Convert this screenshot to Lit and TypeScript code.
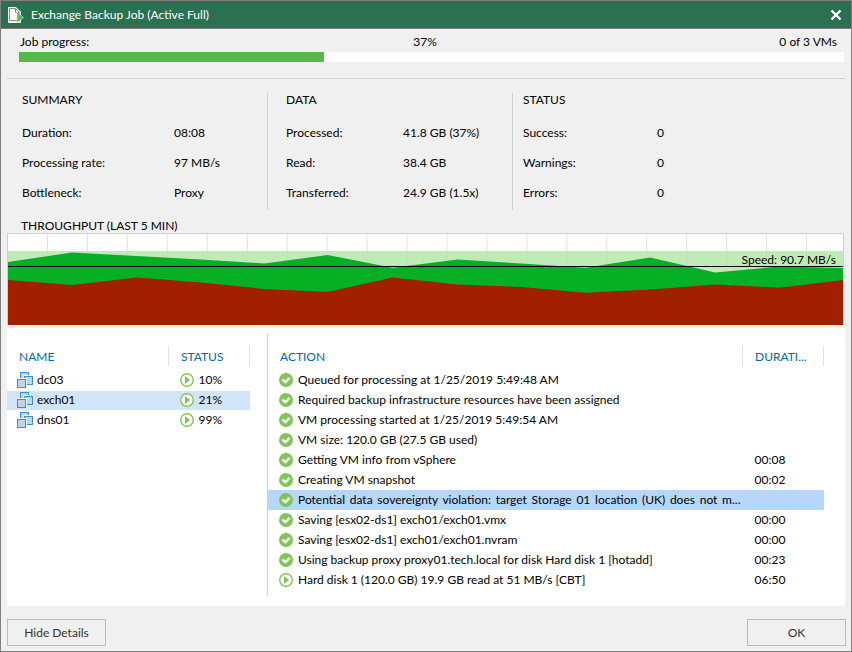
import { LitElement, html, css, svg } from "lit";
import { customElement } from "lit/decorators.js";
import { classMap } from "lit/directives/class-map.js";

type Row = { label: string; value: string };
type Group = { title: string; rows: Row[] };
type Vm = { name: string; status: string; selected?: boolean };
type Action = { text: string; duration?: string; running?: boolean; selected?: boolean };

const GROUPS: Group[] = [
  {
    title: "SUMMARY",
    rows: [
      { label: "Duration:", value: "08:08" },
      { label: "Processing rate:", value: "97 MB/s" },
      { label: "Bottleneck:", value: "Proxy" },
    ],
  },
  {
    title: "DATA",
    rows: [
      { label: "Processed:", value: "41.8 GB (37%)" },
      { label: "Read:", value: "38.4 GB" },
      { label: "Transferred:", value: "24.9 GB (1.5x)" },
    ],
  },
  {
    title: "STATUS",
    rows: [
      { label: "Success:", value: "0" },
      { label: "Warnings:", value: "0" },
      { label: "Errors:", value: "0" },
    ],
  },
];

const VMS: Vm[] = [
  { name: "dc03", status: "10%" },
  { name: "exch01", status: "21%", selected: true },
  { name: "dns01", status: "99%" },
];

const ACTIONS: Action[] = [
  { text: "Queued for processing at 1/25/2019 5:49:48 AM" },
  { text: "Required backup infrastructure resources have been assigned" },
  { text: "VM processing started at 1/25/2019 5:49:54 AM" },
  { text: "VM size: 120.0 GB (27.5 GB used)" },
  { text: "Getting VM info from vSphere", duration: "00:08" },
  { text: "Creating VM snapshot", duration: "00:02" },
  {
    text: "Potential data sovereignty violation: target Storage 01 location (UK) does not m...",
    selected: true,
  },
  { text: "Saving [esx02-ds1] exch01/exch01.vmx", duration: "00:00" },
  { text: "Saving [esx02-ds1] exch01/exch01.nvram", duration: "00:00" },
  { text: "Using backup proxy proxy01.tech.local for disk Hard disk 1 [hotadd]", duration: "00:23" },
  { text: "Hard disk 1 (120.0 GB) 19.9 GB read at 51 MB/s [CBT]", duration: "06:50", running: true },
];

const doneIcon = svg`<svg class="icon" viewBox="0 0 14 14" width="14" height="14" aria-hidden="true">
  <circle cx="7" cy="7" r="7" fill="#7fc655"/>
  <path d="M3.4 6.6 6.4 9.2 10.6 4.8" fill="none" stroke="#fff" stroke-width="2.4"/>
</svg>`;

const runIcon = svg`<svg class="icon" viewBox="0 0 14 14" width="14" height="14" aria-hidden="true">
  <circle cx="7" cy="7" r="6.3" fill="#fff" stroke="#82c65a" stroke-width="1.4"/>
  <path d="M5 3 10 7 5 11Z" fill="#7fc655"/>
</svg>`;

const vmIcon = svg`<svg class="icon" viewBox="0 0 16 16" width="16" height="16" aria-hidden="true">
  <rect x="3.5" y="0.5" width="8" height="8" fill="#b9d5ef" stroke="#3f8fc4"/>
  <path d="M6.5 13V3.5H12" fill="none" stroke="#fff"/>
  <rect x="7.5" y="4.5" width="8" height="8" fill="#b9d5ef" stroke="#3f8fc4"/>
  <path d="M0 6.5H9.5V16" fill="none" stroke="#fff"/>
  <rect x="0.5" y="7.5" width="8" height="8" fill="#b9d5ef" stroke="#3f8fc4"/>
</svg>`;

@customElement("app-root")
export class AppRoot extends LitElement {
  static styles = css`
    :host {
      display: flex;
      flex-direction: column;
      box-sizing: border-box;
      min-height: 100vh;
      border: 1px solid #808080;
      background: #f0f0f0;
      color: #000;
      font: 12px/16px Lato, "Liberation Sans", sans-serif;
      white-space: nowrap;
    }
    .titlebar {
      display: flex;
      align-items: center;
      gap: 7px;
      height: 27px;
      padding: 0 9px 0 7px;
      background: #2b7151;
      border-bottom: 1px solid #808080;
      color: #fff;
    }
    h1, h2 {
      margin: 0;
      font: inherit;
    }
    h1 {
      flex: 1;
    }
    .icon {
      display: block;
      flex: none;
    }
    button {
      box-sizing: border-box;
      margin: 0;
      font: inherit;
      color: #333;
    }
    .close {
      display: flex;
      padding: 0;
      border: 0;
      background: none;
    }
    main {
      flex: 1;
      display: flex;
      flex-direction: column;
      padding: 5px 6px 0;
    }
    .progress {
      padding: 0 1px 16px 12px;
      border-bottom: 1px solid #d0d0d0;
    }
    .progress-text {
      display: grid;
      grid-template-columns: 1fr auto 1fr;
      padding: 0 7px 2px 1px;
    }
    .percent {
      padding-right: 7px;
    }
    .count {
      text-align: right;
    }
    .track {
      height: 10px;
      background: #fff;
    }
    .fill {
      height: 100%;
      background: #54b948;
    }
    .stats {
      display: grid;
      grid-template-columns: 261fr 245fr 332fr;
      padding: 14px 0 8px;
    }
    .group {
      border-right: 1px solid #d0d0d0;
      padding-left: 18px;
      height: 117px;
    }
    .group h2 {
      line-height: 14px;
    }
    .group:first-child {
      padding-left: 15px;
    }
    .group:nth-child(2) {
      --label: 117px;
    }
    .group:last-child {
      border: 0;
      padding-left: 10px;
      --label: 134px;
    }
    dl {
      display: grid;
      grid-template-columns: var(--label, 152px) 1fr;
      row-gap: 14px;
      margin: 18px 0 0;
    }
    dd {
      margin: 0;
    }
    .chart-title {
      padding-left: 14px;
      height: 15px;
    }
    .chart {
      position: relative;
      height: 91px;
      margin: 0 1px 3px 0;
      border: 1px solid #d0d0d0;
      border-bottom: 0;
      background: #fff;
    }
    .chart svg {
      display: block;
      width: 100%;
      height: 100%;
    }
    .speed {
      position: absolute;
      right: 7px;
      top: 18px;
    }
    .panel {
      flex: none;
      display: grid;
      grid-template-columns: 261px 1fr;
      box-sizing: border-box;
      min-height: 278px;
      padding: 5px 0 10px;
      background: #fff;
    }
    .vms {
      border-right: 1px solid #d0d0d0;
      padding: 13px 17px 0 0;
    }
    .actions {
      padding: 13px 21px 0 0;
    }
    table {
      width: 100%;
      border-collapse: collapse;
      table-layout: fixed;
    }
    th, td {
      height: 20px;
      padding: 0;
      font-weight: normal;
      text-align: left;
    }
    th {
      box-sizing: border-box;
      padding: 2px 0 0 12px;
      border-right: 1px solid #e3e3e3;
      color: #0067b3;
    }
    thead::after {
      content: "";
      display: block;
      height: 4px;
    }
    .cell {
      display: flex;
      align-items: center;
      gap: 5px;
      box-sizing: border-box;
      height: 19px;
      padding-left: 11px;
    }
    .name .cell {
      gap: 4px;
      padding-left: 10px;
    }
    .label {
      flex: 1;
      overflow: hidden;
    }
    .status-col, .duration-col {
      width: 81px;
    }
    .duration {
      padding-left: 12px;
    }
    .vms .selected .cell {
      background: #d1e5f9;
    }
    .actions .selected td {
      background: #b5d7fb;
    }
    .actions .selected .label {
      margin-right: 2px;
      max-height: 16px;
      white-space: normal;
      text-align-last: justify;
    }
    footer {
      display: flex;
      justify-content: space-between;
      padding: 13px 5px 5px 6px;
    }
    .push {
      width: 99px;
      height: 27px;
      padding: 0;
      border: 1px solid #bcbcbc;
      background: #f0f0f0;
    }
  `;

  private group(g: Group) {
    return html`<section class="group">
      <h2>${g.title}</h2>
      <dl>${g.rows.map((r) => html`<dt>${r.label}</dt><dd>${r.value}</dd>`)}</dl>
    </section>`;
  }

  private chart() {
    const lines = Array.from({ length: 20 }, (_, i) => 39 + i * 40);
    return html`<svg viewBox="0 0 836 91" preserveAspectRatio="none" role="img" aria-label="Throughput">
      ${lines.map((x) => svg`<rect x=${x} y="0" width="1" height="91" fill="#e2e2e2"/>`)}
      <rect y="17" width="836" height="74" fill="#b2e6a4" fill-opacity="0.8"/>
      <path fill="#06b025" d="M0 28 64 18.5 129 22 193 25.5 257 29.5 320 21 385 33.7 450 25.5 514 29.5 578 33.7 643 23.5 708 38.5 772 32.5 836 34V91H0Z"/>
      <path fill="#a02000" d="M0 46 64 51 129 43.5 193 48.5 257 55 320 58 385 43.5 450 50.5 514 53 578 58.7 643 55.5 708 50.5 772 53.7 836 46V91H0Z"/>
      <rect y="32" width="836" height="1" fill="#000"/>
    </svg>`;
  }

  render() {
    const done = 37;
    return html`
      <header class="titlebar">
        <svg class="icon" viewBox="0 0 16 16" width="16" height="16" aria-hidden="true">
          <path d="M0.5 0.5H8L12.5 5V15.5H0.5Z" fill="#fff" stroke="#fff"/>
          <path d="M1.5 1.5H7.5L11.5 5.5V13.5H1.5Z" fill="#fff" stroke="#8a8a8a"/>
          <path d="M7.5 1.5V5.5H11.5" fill="none" stroke="#8a8a8a"/>
          <path d="M9 5 15.5 10.5 9 16Z" fill="#54b948" stroke="#d9efd3" stroke-width="0.6"/>
        </svg>
        <h1>Exchange Backup Job (Active Full)</h1>
        <button class="close" aria-label="Close">
          <svg class="icon" viewBox="0 0 12 12" width="12" height="12" aria-hidden="true">
            <path d="M1.5 1.5 10.5 10.5M10.5 1.5 1.5 10.5" stroke="#fff" stroke-width="2.4"/>
          </svg>
        </button>
      </header>
      <main>
        <section class="progress">
          <div class="progress-text">
            <span id="job">Job progress:</span><span class="percent">${done}%</span><span class="count">0 of 3 VMs</span>
          </div>
          <div class="track" role="progressbar" aria-labelledby="job" aria-valuenow=${done}>
            <div class="fill" style="width:${done}%"></div>
          </div>
        </section>
        <div class="stats">${GROUPS.map((g) => this.group(g))}</div>
        <h2 class="chart-title">THROUGHPUT (LAST 5 MIN)</h2>
        <div class="chart">${this.chart()}<span class="speed">Speed: 90.7 MB/s</span></div>
        <div class="panel">
          <div class="vms">
            <table>
              <colgroup><col /><col class="status-col" /></colgroup>
              <thead><tr><th>NAME</th><th>STATUS</th></tr></thead>
              <tbody>
                ${VMS.map((v) => html`<tr class=${classMap({ selected: !!v.selected })}>
                  <td class="name"><div class="cell">${vmIcon}<span>${v.name}</span></div></td>
                  <td><div class="cell">${runIcon}<span>${v.status}</span></div></td>
                </tr>`)}
              </tbody>
            </table>
          </div>
          <div class="actions">
            <table>
              <colgroup><col /><col class="duration-col" /></colgroup>
              <thead><tr><th>ACTION</th><th>DURATI...</th></tr></thead>
              <tbody>
                ${ACTIONS.map((a) => html`<tr class=${classMap({ selected: !!a.selected })}>
                  <td><div class="cell">${a.running ? runIcon : doneIcon}<span class="label">${a.text}</span></div></td>
                  <td class="duration">${a.duration ?? ""}</td>
                </tr>`)}
              </tbody>
            </table>
          </div>
        </div>
      </main>
      <footer>
        <button class="push">Hide Details</button>
        <button class="push">OK</button>
      </footer>
    `;
  }
}
